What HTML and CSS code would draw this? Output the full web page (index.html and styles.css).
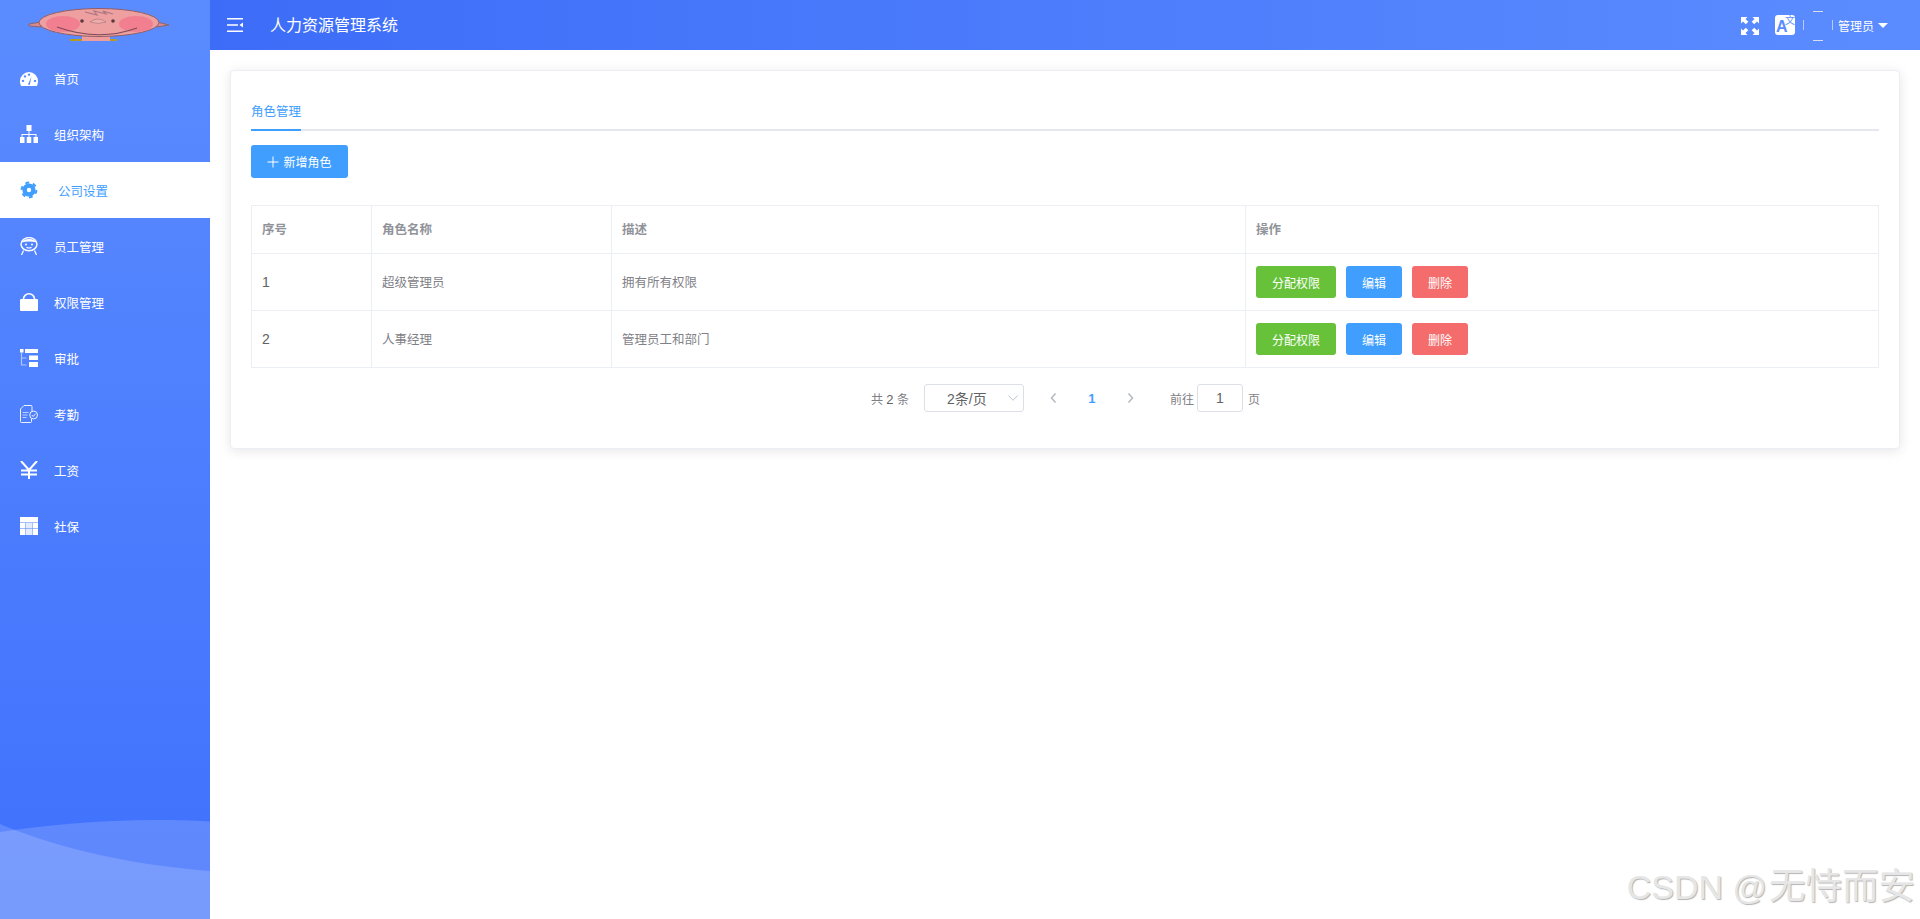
FILE: index.html
```html
<!DOCTYPE html>
<html lang="en">

<head>
    <meta charset="UTF-8">
    <meta name="viewport" content="width=device-width, initial-scale=1.0">
    <title>人力资源管理系统</title>
    <link rel="stylesheet" href="styles.css">
</head>

<body>
    <div class="container">
        <!-- Sidebar -->
        <aside class="sidebar">
            <div class="logo">
                <svg width="210" height="50" viewBox="0 0 210 50">
                    <path d="M70 41v-2h47v2z" fill="#b79a20" />
                    <path d="M82 33h28v8H82z" fill="#ee9c9c" />
                    <path d="M29 24l12-2v5l-12-1zM169 25l-12-3v5z" fill="#d98a8e" stroke="#8a6470" stroke-width="1" />
                    <ellipse cx="99" cy="22.500" rx="60" ry="14" fill="#ee9fa0" stroke="#8f5f68" stroke-width="1" />
                    <ellipse cx="63" cy="24" rx="17" ry="8" fill="#f27f90" />
                    <ellipse cx="136" cy="24" rx="17" ry="8" fill="#f27f90" />
                    <path d="M57 27q42 15 80 1" fill="none" stroke="#7d4b55" stroke-width="1.100" />
                    <path d="M90 22q8-6 16 0q-8 3-16 0z" fill="#f2aaa8" stroke="#a87c80" stroke-width=".7" />
                    <circle cx="82" cy="21" r="1.800" fill="#5b3940" />
                    <circle cx="113" cy="21" r="1.800" fill="#5b3940" />
                    <path d="M85 12l12 3-3-4 12 3-3-3 10 3" fill="none" stroke="#a97880" stroke-width="1.200" />
                </svg>
            </div>
            <nav class="menu">
                <a class="menu-item">
                    <svg class="icon" viewBox="0 0 18 18"><path fill-rule="evenodd" d="M1.200 17C.4 15.800 0 14 0 12a9 9 0 0 1 18 0c0 2-.4 3.800-1.200 5zM3 10.700a1.200 1.200 0 1 0 .01 0zM5 6.200a1.200 1.200 0 1 0 .01 0zM9 4.400a1.200 1.200 0 1 0 .01 0zM15 10.700a1.200 1.200 0 1 0 .01 0zM8 15.500l1.800.4 1.600-8.400z" /></svg>
                    <span>首页</span>
                </a>
                <a class="menu-item">
                    <svg class="icon" viewBox="0 0 18 18"><path d="M6.500 0h5v6h-5zM8.500 6h1v3h7v3h-1v-2h-6v2h-1v-2h-6v2h-1V9h7zM0 12h4.500v6H0zM6.750 12h4.500v6h-4.500zM13.500 12H18v6h-4.500z" /></svg>
                    <span>组织架构</span>
                </a>
                <a class="menu-item active">
                    <svg class="icon" viewBox="0 0 18 18">
                        <circle cx="9" cy="9" r="4.400" fill="none" stroke="currentColor" stroke-width="4.400" />
                        <circle cx="9" cy="9" r="7.400" fill="none" stroke="currentColor" stroke-width="2" stroke-dasharray="3.870 3.870" />
                    </svg>
                    <span>公司设置</span>
                </a>
                <a class="menu-item">
                    <svg class="icon" viewBox="0 0 18 18">
                        <ellipse cx="9" cy="7.200" rx="8" ry="6.600" fill="none" stroke="currentColor" stroke-width="1.400" />
                        <path d="M1.500 5.500C3 .8 15 .8 16.500 5.500 12 4 6 4 1.500 5.500z" />
                        <circle cx="6" cy="7.600" r="1" /><circle cx="12" cy="7.600" r="1" />
                        <path d="M6.500 10.200q2.500 1.600 5 0M3.500 13.500L1.500 18M14.500 13.500l2 4.500" fill="none" stroke="currentColor" stroke-width="1.200" />
                    </svg>
                    <span>员工管理</span>
                </a>
                <a class="menu-item">
                    <svg class="icon" viewBox="0 0 18 18">
                        <path d="M1 6h16a1 1 0 0 1 1 1v10a1 1 0 0 1-1 1H1a1 1 0 0 1-1-1V7a1 1 0 0 1 1-1z" />
                        <path d="M3.500 7V6a5.500 5.200 0 0 1 11 0v1" fill="none" stroke="currentColor" stroke-width="1.600" />
                    </svg>
                    <span>权限管理</span>
                </a>
                <a class="menu-item">
                    <svg class="icon" viewBox="0 0 18 18">
                        <path d="M0 0h3.500v3.500H0zM5 0h13v4H5zM9 6.500h9v4.500H9zM9 13h9v5H9z" />
                        <path d="M1.500 3.500V16h5M1.500 9h5" fill="none" stroke="currentColor" stroke-width="1.200" opacity=".55" />
                    </svg>
                    <span>审批</span>
                </a>
                <a class="menu-item">
                    <svg class="icon" viewBox="0 0 18 18">
                        <path d="M12 6.500V1.500a1 1 0 0 0-1-1H4L.5 4v12.500a1 1 0 0 0 1 1h9a1 1 0 0 0 1-1V14" fill="none" stroke="currentColor" stroke-width=".9" />
                        <path d="M2.500 7.500h6M2.500 10h5M2.500 12.500h4" fill="none" stroke="currentColor" stroke-width=".8" opacity=".8" />
                        <circle cx="13.600" cy="10" r="3.900" fill="none" stroke="currentColor" stroke-width=".9" />
                        <path d="M11.800 10l1.400 1.500 2.400-2.800" fill="none" stroke="currentColor" stroke-width=".9" />
                    </svg>
                    <span>考勤</span>
                </a>
                <a class="menu-item">
                    <svg class="icon" viewBox="0 0 18 18">
                        <path d="M1 0l8 9 8-9M1 9.600h16M1 13.400h16M9 9v9" fill="none" stroke="currentColor" stroke-width="2" />
                    </svg>
                    <span>工资</span>
                </a>
                <a class="menu-item">
                    <svg class="icon" viewBox="0 0 18 18">
                        <path d="M0 0h18v5.500H0zM0 6h5.500v5.500H0zM12.500 6H18v5.500h-5.500zM0 12h5.500v6H0zM12.500 12H18v6h-5.500z" />
                        <path d="M6 6h6v5.500H6zM6 12h6v6H6z" opacity=".85" />
                    </svg>
                    <span>社保</span>
                </a>
            </nav>
            <!-- Waves at the bottom -->
            <svg class="waves" width="210" height="100" viewBox="0 0 210 100">
                <path d="M0 13C60 4 130-2 210 2.500V100H0z" fill="#fff" fill-opacity=".16" />
                <path d="M0 5C50 26 120 45 210 52V100H0z" fill="#fff" fill-opacity=".16" />
            </svg>
        </aside>

        <div class="main">
            <!-- Top bar -->
            <header class="topbar">
                <svg class="hamburger" width="16" height="14" viewBox="0 0 16 14">
                    <path d="M0 0h16v1.500H0zM0 6.200h11v1.500H0zM0 12.500h16V14H0z" fill="#fff" />
                    <path d="M16 4.500v5L12.500 7z" fill="#fff" />
                </svg>
                <span class="system-name">人力资源管理系统</span>
                <div class="topbar-right">
                    <svg class="fullscreen" width="18" height="18" viewBox="0 0 18 18" fill="#fff">
                        <path d="M0 0h6.500L4.500 2l2.800 2.800-2.500 2.500L2 4.500 0 6.500z" />
                        <path d="M18 0h-6.500l2 2-2.800 2.800 2.500 2.500L16 4.500l2 2z" />
                        <path d="M0 18h6.500l-2-2 2.800-2.800-2.500-2.500L2 13.500l-2-2z" />
                        <path d="M18 18h-6.500l2-2-2.800-2.800 2.500-2.500 2.800 2.800 2-2z" />
                    </svg>
                    <div class="lang"><span class="lang-a">A</span><span class="lang-z">文</span></div>
                    <svg class="avatar" width="30" height="30" viewBox="0 0 30 30">
                        <path d="M10 .5h10M10 29.500h10" stroke="#d8dde8" stroke-width="1" />
                        <path d="M.5 9v10M29.500 9v10" stroke="#b9cbf5" stroke-width="1" />
                    </svg>
                    <span class="username">管理员</span>
                    <span class="caret"></span>
                </div>
            </header>

            <div class="content">
                <div class="card">
                    <div class="tabs">
                        <div class="tab active">角色管理</div>
                    </div>
                    <button class="btn btn-primary btn-add">
                        <svg width="12" height="12" viewBox="0 0 12 12"><path d="M6 .5v11M.5 6h11" stroke="#fff" stroke-width="1" /></svg>
                        新增角色
                    </button>
                    <table class="role-table">
                        <colgroup>
                            <col class="col-no">
                            <col class="col-name">
                            <col class="col-desc">
                            <col class="col-op">
                        </colgroup>
                        <thead>
                            <tr>
                                <th>序号</th>
                                <th>角色名称</th>
                                <th>描述</th>
                                <th>操作</th>
                            </tr>
                        </thead>
                        <tbody>
                            <tr>
                                <td class="num">1</td>
                                <td>超级管理员</td>
                                <td>拥有所有权限</td>
                                <td class="ops">
                                    <button class="btn btn-success btn-wide">分配权限</button>
                                    <button class="btn btn-primary">编辑</button>
                                    <button class="btn btn-danger">删除</button>
                                </td>
                            </tr>
                            <tr>
                                <td class="num">2</td>
                                <td>人事经理</td>
                                <td>管理员工和部门</td>
                                <td class="ops">
                                    <button class="btn btn-success btn-wide">分配权限</button>
                                    <button class="btn btn-primary">编辑</button>
                                    <button class="btn btn-danger">删除</button>
                                </td>
                            </tr>
                        </tbody>
                    </table>

                    <!-- Pagination -->
                    <div class="pagination">
                        <span class="total">共 <b>2</b> 条</span>
                        <div class="page-size">
                            <span>2条/页</span>
                            <svg width="10" height="6" viewBox="0 0 10 6"><path d="M.5.500L5 5.300 9.500.500" fill="none" stroke="#c0c4cc" stroke-width="1" /></svg>
                        </div>
                        <span class="page-btn prev">
                            <svg width="7" height="10" viewBox="0 0 7 10"><path d="M5.500.500L1.500 5l4 4.500" fill="none" stroke="#b4b8c2" stroke-width="1.500" /></svg>
                        </span>
                        <span class="page-btn current">1</span>
                        <span class="page-btn next">
                            <svg width="7" height="10" viewBox="0 0 7 10"><path d="M1.500.500l4 4.500-4 4.500" fill="none" stroke="#b4b8c2" stroke-width="1.500" /></svg>
                        </span>
                        <span class="jump">前往</span>
                        <div class="page-input">1</div>
                        <span class="jump-end">页</span>
                    </div>
                </div>
            </div>
        </div>
    </div>
    <div class="watermark">CSDN @<span class="watermark-cjk">无恃而安</span></div>
</body>

</html>
```

FILE: styles.css
```css
* {
    margin: 0;
    padding: 0;
    box-sizing: border-box;
}

body {
    font-family: "Liberation Sans", "Noto Sans CJK SC", sans-serif;
    background-color: #fff;
    overflow: hidden;
}

.container {
    display: flex;
    height: 100vh;
    width: 100vw;
}

.sidebar {
    position: relative;
    flex: 0 0 210px;
    width: 210px;
    background: linear-gradient(to bottom, #5b8cff, #3f70fd);
    overflow: hidden;
}

.logo {
    height: 50px;
    filter: blur(0.7px);
}

.logo svg {
    display: block;
}

.menu-item {
    display: flex;
    align-items: center;
    height: 56px;
    padding-left: 20px;
    color: #fff;
    font-size: 12.5px;
}

.menu-item .icon {
    width: 18px;
    height: 18px;
    margin-right: 16px;
    fill: currentColor;
}

.menu-item.active {
    background-color: #fff;
    color: #409eff;
}

.menu-item.active span {
    padding-left: 4px;
}

.waves {
    position: absolute;
    left: 0;
    bottom: 0;
}

.main {
    flex: 1;
    display: flex;
    flex-direction: column;
    min-width: 0;
}

.topbar {
    display: flex;
    align-items: center;
    height: 50px;
    background: linear-gradient(to right, #3d6df8, #5b8cff);
    color: #fff;
    padding: 0 32px 0 17px;
}

.system-name {
    margin-left: 27px;
    margin-bottom: 2px;
    font-size: 16px;
}

.topbar-right {
    margin-left: auto;
    display: flex;
    align-items: center;
}

.fullscreen {
    margin-top: 2px;
}

.lang {
    position: relative;
    width: 20px;
    height: 20px;
    margin-left: 16px;
    background-color: #fff;
    border-radius: 3px;
    color: #5b8cff;
}

.lang-a {
    position: absolute;
    left: 1px;
    top: 4px;
    font-size: 16px;
    line-height: 15px;
    font-weight: bold;
}

.lang-z {
    position: absolute;
    right: 0;
    top: 1px;
    font-size: 10px;
    line-height: 10px;
}

.avatar {
    margin-left: 8px;
    margin-top: 2px;
}

.username {
    margin-left: 5px;
    font-size: 12px;
    margin-top: 1px;
}

.caret {
    margin-left: 4px;
    width: 0;
    height: 0;
    border-left: 5px solid transparent;
    border-right: 5px solid transparent;
    border-top: 5px solid #fff;
}

.content {
    flex: 1;
    padding: 20px 20px 0;
}

.card {
    height: 379px;
    padding: 20px;
    background-color: #fff;
    border: 1px solid #ebeef5;
    border-radius: 4px;
    box-shadow: 0 2px 12px rgba(0, 0, 0, 0.1);
}

.tabs {
    height: 40px;
    border-bottom: 2px solid #e4e7ed;
}

.tab {
    display: inline-block;
    height: 40px;
    line-height: 42px;
    font-size: 12.5px;
    color: #409eff;
    border-bottom: 2px solid #409eff;
}

.btn {
    display: inline-flex;
    align-items: center;
    justify-content: center;
    height: 32px;
    width: 56px;
    border: none;
    border-radius: 3px;
    color: #fff;
    font-family: inherit;
    font-size: 12px;
}

.btn-add {
    width: 97px;
    height: 33px;
    margin-top: 14px;
    gap: 4px;
}

.btn-wide {
    width: 80px;
}

.btn-primary {
    background-color: #409eff;
}

.btn-success {
    background-color: #67c23a;
}

.btn-danger {
    background-color: #f56c6c;
}

.role-table {
    width: 1627px;
    margin-top: 27px;
    border-collapse: collapse;
    table-layout: fixed;
    font-size: 12.5px;
    color: #7f8187;
}

.col-no {
    width: 120px;
}

.col-name {
    width: 240px;
}

.col-desc {
    width: 634px;
}

.col-op {
    width: 633px;
}

.role-table th,
.role-table td {
    border: 1px solid #ebeef5;
    padding: 0 10px 2px;
    text-align: left;
}

.role-table th {
    height: 48px;
    color: #909399;
    font-weight: bold;
}

.role-table td {
    height: 57px;
}

.role-table .num {
    padding-bottom: 0;
    font-size: 14px;
    color: #606266;
}

.role-table .ops {
    padding-bottom: 0;
    font-size: 0;
}

.ops .btn + .btn {
    margin-left: 10px;
}

.pagination {
    display: flex;
    align-items: center;
    justify-content: center;
    width: 1628px;
    height: 28px;
    margin-top: 16px;
    padding-left: 1px;
    font-size: 12px;
    color: #7f8187;
}

.total {
    width: 37px;
    margin-right: 16px;
    white-space: nowrap;
}

.total b {
    font-weight: normal;
    font-size: 13px;
    color: #606266;
}

.page-size {
    display: flex;
    align-items: center;
    justify-content: space-between;
    width: 100px;
    height: 28px;
    padding: 0 5px 0 22px;
    border: 1px solid #dcdfe6;
    border-radius: 3px;
    font-size: 14px;
    color: #606266;
}

.page-btn {
    display: flex;
    align-items: center;
    justify-content: center;
    width: 30px;
    height: 28px;
    margin-left: 9px;
}

.prev {
    margin-left: 15px;
}

.page-btn.current {
    margin-left: 8px;
    color: #409eff;
    font-size: 13px;
    font-weight: bold;
}

.jump {
    margin-left: 24px;
}

.page-input {
    width: 46px;
    height: 28px;
    margin-left: 3px;
    border: 1px solid #dcdfe6;
    border-radius: 3px;
    font-size: 14px;
    line-height: 26px;
    text-align: center;
    color: #606266;
}

.jump-end {
    margin-left: 5px;
}

.watermark {
    position: absolute;
    right: 5px;
    bottom: 12px;
    font-size: 34px;
    line-height: 40px;
    color: #e6e6e6;
    text-shadow: 1px 1px 1px #b4b4b4;
    white-space: nowrap;
}

.watermark-cjk {
    margin-left: 2px;
    font-size: 36.5px;
}
```
